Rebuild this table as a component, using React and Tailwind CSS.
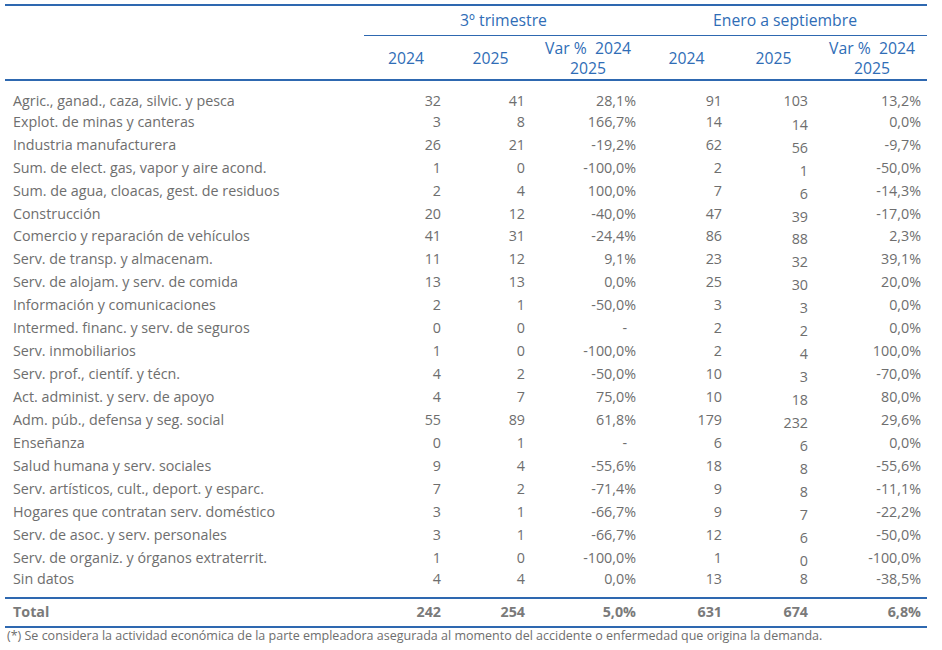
import React from "react";

const rows = [
  ["Agric., ganad., caza, silvic. y pesca", "32", "41", "28,1%", "91", "103", "13,2%"],
  ["Explot. de minas y canteras", "3", "8", "166,7%", "14", "14", "0,0%"],
  ["Industria manufacturera", "26", "21", "-19,2%", "62", "56", "-9,7%"],
  ["Sum. de elect. gas, vapor y aire acond.", "1", "0", "-100,0%", "2", "1", "-50,0%"],
  ["Sum. de agua, cloacas, gest. de residuos", "2", "4", "100,0%", "7", "6", "-14,3%"],
  ["Construcción", "20", "12", "-40,0%", "47", "39", "-17,0%"],
  ["Comercio y reparación de vehículos", "41", "31", "-24,4%", "86", "88", "2,3%"],
  ["Serv. de transp. y almacenam.", "11", "12", "9,1%", "23", "32", "39,1%"],
  ["Serv. de alojam. y serv. de comida", "13", "13", "0,0%", "25", "30", "20,0%"],
  ["Información y comunicaciones", "2", "1", "-50,0%", "3", "3", "0,0%"],
  ["Intermed. financ. y serv. de seguros", "0", "0", "-", "2", "2", "0,0%"],
  ["Serv. inmobiliarios", "1", "0", "-100,0%", "2", "4", "100,0%"],
  ["Serv. prof., científ. y técn.", "4", "2", "-50,0%", "10", "3", "-70,0%"],
  ["Act. administ. y serv. de apoyo", "4", "7", "75,0%", "10", "18", "80,0%"],
  ["Adm. púb., defensa y seg. social", "55", "89", "61,8%", "179", "232", "29,6%"],
  ["Enseñanza", "0", "1", "-", "6", "6", "0,0%"],
  ["Salud humana y serv. sociales", "9", "4", "-55,6%", "18", "8", "-55,6%"],
  ["Serv. artísticos, cult., deport. y esparc.", "7", "2", "-71,4%", "9", "8", "-11,1%"],
  ["Hogares que contratan serv. doméstico", "3", "1", "-66,7%", "9", "7", "-22,2%"],
  ["Serv. de asoc. y serv. personales", "3", "1", "-66,7%", "12", "6", "-50,0%"],
  ["Serv. de organiz. y órganos extraterrit.", "1", "0", "-100,0%", "1", "0", "-100,0%"],
  ["Sin datos", "4", "4", "0,0%", "13", "8", "-38,5%"],
];

const cols = "grid grid-cols-[359px_84px_85px_110px_87px_87px_110px]";
const last = rows.length - 1;

function Row({ r, i }) {
  const h = i === 0 ? "h-[20px]" : "h-[22.95px]";
  const shift = i === last ? "-translate-y-[2px]" : "";
  const shift5 = i === 0 ? "" : i === last ? "-translate-y-[2px]" : "translate-y-[3px]";
  return (
    <div className={`${cols} ${h} items-center`}>
      <div className={`pl-[8px] whitespace-nowrap ${shift}`}>{r[0]}</div>
      <div className={`text-right pr-[7px] ${shift}`}>{r[1]}</div>
      <div className={`text-right pr-[8px] ${shift}`}>{r[2]}</div>
      <div className={`text-right ${r[3] === "-" ? "pr-[16px]" : "pr-[7px]"} ${shift}`}>{r[3]}</div>
      <div className={`text-right pr-[8px] ${shift}`}>{r[4]}</div>
      <div className={`text-right pr-[9px] ${shift5}`}>{r[5]}</div>
      <div className={`text-right pr-[6px] ${shift}`}>{r[6]}</div>
    </div>
  );
}

export default function App() {
  return (
    <div
      className="w-[942px] h-[650px] bg-white overflow-hidden"
      style={{ fontFamily: "'Open Sans', 'Noto Sans', sans-serif" }}
    >
      <div className="ml-[5px] w-[922px] mt-[4px] border-t-2 border-[#2e68b0]">
        {/* group header */}
        <div className={`${cols} h-[30px] text-[15.75px] text-[#2f6db6]`}>
          <div />
          <div className="col-span-3 flex items-center justify-center border-b border-[#2e68b0]">
            3º trimestre
          </div>
          <div className="col-span-3 flex items-center justify-center border-b border-[#2e68b0]">
            Enero a septiembre
          </div>
        </div>
        {/* sub header */}
        <div className={`${cols} h-[45px] text-[15.75px] text-[#2f6db6] border-b-2 border-[#2e68b0] leading-[20px]`}>
          <div />
          <div className="flex items-center justify-center">2024</div>
          <div className="flex items-center justify-center">2025</div>
          <div className="flex flex-col items-center justify-center">
            <span className="whitespace-pre">Var %  2024</span>
            <span>2025</span>
          </div>
          <div className="flex items-center justify-center">2024</div>
          <div className="flex items-center justify-center">2025</div>
          <div className="flex flex-col items-center justify-center">
            <span className="whitespace-pre">Var %  2024</span>
            <span>2025</span>
          </div>
        </div>
        {/* body */}
        <div className="pt-[9px] pb-[5px] text-[14.3px] text-[#6e6e6e] border-b-2 border-[#2e68b0]">
          {rows.map((r, i) => (
            <Row key={i} r={r} i={i} />
          ))}
        </div>
        {/* total */}
        <div className={`${cols} h-[29px] items-center text-[14.3px] font-bold text-[#7a7a7a] border-b-2 border-[#2e68b0]`}>
          <div className="pl-[8px]">Total</div>
          <div className="text-right pr-[7px]">242</div>
          <div className="text-right pr-[8px]">254</div>
          <div className="text-right pr-[7px]">5,0%</div>
          <div className="text-right pr-[8px]">631</div>
          <div className="text-right pr-[9px]">674</div>
          <div className="text-right pr-[6px]">6,8%</div>
        </div>
      </div>
      <div className="pl-[7px] text-[12.5px] leading-[16px] text-[#6e6e6e] whitespace-nowrap">
        (*) Se considera la actividad económica de la parte empleadora asegurada al momento del accidente o enfermedad que origina la demanda.
      </div>
    </div>
  );
}
